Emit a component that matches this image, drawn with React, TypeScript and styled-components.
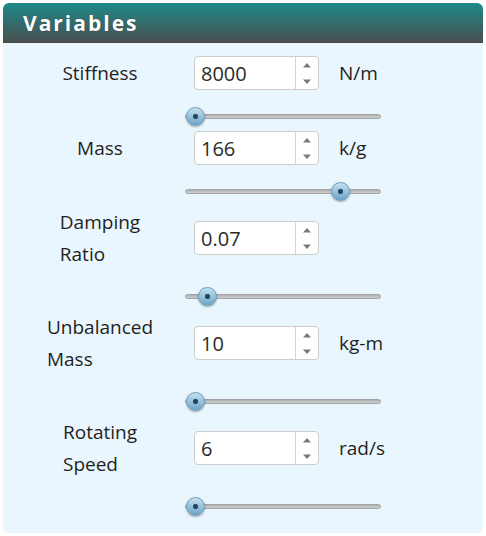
import React from 'react'
import styled, { createGlobalStyle } from 'styled-components'

const GlobalStyle = createGlobalStyle`
  html, body {
    margin: 0;
    padding: 0;
    background: #ffffff;
  }
  body {
    font-family: "Open Sans", Lato, sans-serif;
  }
`

interface Variable {
  label: string[];
  value: string;
  unit: string;
  min: number;
  max: number;
  step: number;
  num: number;
}

const variables: Variable[] = [
  { label: ['Stiffness'], value: '8000', unit: 'N/m', min: 8000, max: 50000, step: 100, num: 8000 },
  { label: ['Mass'], value: '166', unit: 'k/g', min: 0, max: 200, step: 1, num: 166 },
  { label: ['Damping', 'Ratio'], value: '0.07', unit: '', min: 0, max: 1, step: 0.01, num: 0.07 },
  { label: ['Unbalanced', 'Mass'], value: '10', unit: 'kg-m', min: 10, max: 100, step: 1, num: 10 },
  { label: ['Rotating', 'Speed'], value: '6', unit: 'rad/s', min: 6, max: 100, step: 1, num: 6 },
]

function Spinner() {
  return (
    <SpinBox>
      <svg width="10" height="6" viewBox="0 0 10 6">
        <path d="M1 5.5 L5 1 L9 5.5 Z" fill="#7a7a7a" />
      </svg>
      <svg width="10" height="6" viewBox="0 0 10 6">
        <path d="M1 0.5 L5 5 L9 0.5 Z" fill="#7a7a7a" />
      </svg>
    </SpinBox>
  )
}

function VariableBlock({ v }: { v: Variable }) {
  return (
    <Block>
      <Row>
        <LabelCell>
          <Label>
            {v.label.map((l) => (
              <div key={l}>{l}</div>
            ))}
          </Label>
        </LabelCell>
        <NumberBox>
          <NumberText>{v.value}</NumberText>
          <Spinner />
        </NumberBox>
        <Unit>{v.unit}</Unit>
      </Row>
      <SliderRow>
        <Range type="range" min={v.min} max={v.max} step={v.step} defaultValue={v.num} />
      </SliderRow>
    </Block>
  )
}

export default function App() {
  return (
    <>
      <GlobalStyle />
      <Panel>
        <Header>Variables</Header>
        <Body>
          {variables.map((v) => (
            <VariableBlock key={v.label.join(' ')} v={v} />
          ))}
        </Body>
      </Panel>
    </>
  )
}

const Panel = styled.div`
  margin: 3px;
  width: 480px;
  border-radius: 6px;
  overflow: hidden;
  background: #eaf6fd;
`

const Header = styled.div`
  height: 40px;
  box-sizing: border-box;
  padding-left: 20px;
  display: flex;
  align-items: center;
  background: linear-gradient(#1d8a8a, #4b4d4e);
  color: #ffffff;
  font-family: "Open Sans", Lato, sans-serif;
  font-weight: 700;
  font-size: 21px;
  letter-spacing: 2px;
  text-shadow: 0 0 1px rgba(0, 0, 0, 0.5);
`

const Body = styled.div`
  padding: 13px 0 12px 0;
  display: flex;
  flex-direction: column;
`

const Block = styled.div`
  display: flex;
  flex-direction: column;
`

const Row = styled.div`
  display: flex;
  align-items: center;
  min-height: 34px;
`

const LabelCell = styled.div`
  width: 176px;
  margin-left: 9px;
  margin-right: 6px;
  display: flex;
  justify-content: center;
`

const Label = styled.div`
  font-size: 19px;
  line-height: 32px;
  color: #1f1f1f;
`

const NumberBox = styled.div`
  width: 125px;
  height: 34px;
  box-sizing: border-box;
  border: 1px solid #cccccc;
  border-radius: 4px;
  background: #ffffff;
  display: flex;
  align-items: stretch;
`

const NumberText = styled.div`
  flex: 1;
  padding-left: 6px;
  display: flex;
  align-items: center;
  font-size: 20px;
  color: #2a2a2a;
`

const SpinBox = styled.div`
  width: 22px;
  border-left: 1px solid #d4d4d4;
  display: flex;
  flex-direction: column;
  align-items: center;
  justify-content: center;
  gap: 11px;
`

const Unit = styled.div`
  margin-left: 20px;
  font-size: 19px;
  color: #1f1f1f;
`

const SliderRow = styled.div`
  margin-top: 11px;
  height: 30px;
  display: flex;
  align-items: center;
  padding-left: 182px;
`

const Range = styled.input`
  -webkit-appearance: none;
  appearance: none;
  width: 196px;
  height: 20px;
  margin: 0;
  background: transparent;
  outline: none;

  &::-webkit-slider-runnable-track {
    height: 5px;
    border-radius: 3px;
    background: linear-gradient(#b0b0b0, #cfcfcf);
    border: 0.5px solid #a3a3a3;
  }

  &::-webkit-slider-thumb {
    -webkit-appearance: none;
    appearance: none;
    width: 19px;
    height: 19px;
    margin-top: -7.5px;
    border-radius: 50%;
    border: 1px solid #6e9ebd;
    box-sizing: border-box;
    background:
      radial-gradient(circle at 50% 50%, #1f3f55 0, #2c4e66 2.3px, transparent 3px),
      linear-gradient(#c5e0f1, #8fbcd9 60%, #6fa3c5);
    box-shadow: 0 1px 2px rgba(0, 0, 0, 0.35);
  }
`
